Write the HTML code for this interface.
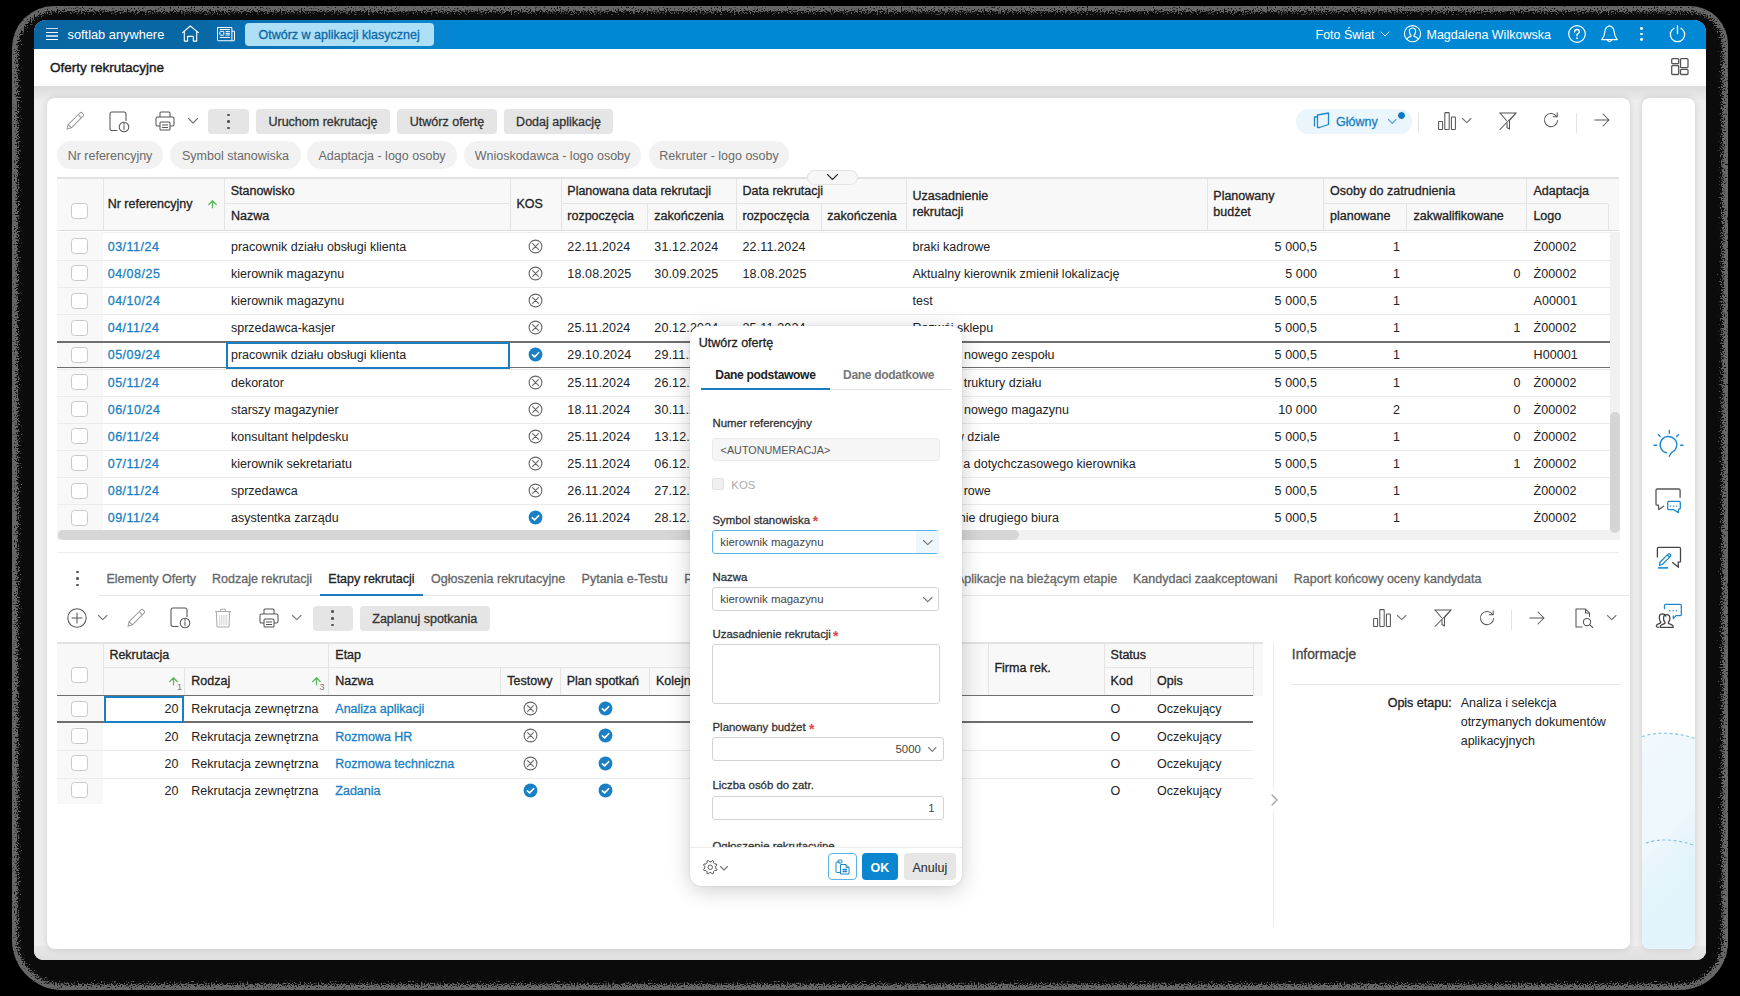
<!DOCTYPE html><html><head><meta charset="utf-8"><title>Oferty rekrutacyjne</title><style>
*{box-sizing:border-box;margin:0;padding:0}
html,body{width:1740px;height:996px;overflow:hidden;background:#000}
body{position:relative;font-family:"Liberation Sans",sans-serif;color:#222;font-size:12.5px}
.a{position:absolute}
.t{position:absolute;white-space:nowrap;line-height:1}
.m{-webkit-text-stroke:0.3px currentColor}
.b{font-weight:700}
svg{position:absolute;overflow:visible}
.ic{fill:none;stroke:#555;stroke-width:1.2;stroke-linecap:round;stroke-linejoin:round}
#scr{position:absolute;left:0;top:0;width:1740px;height:996px;clip-path:inset(20px 34px 36px 34px round 12px 12px 9px 9px);background:#eeeeee}
</style></head><body>
<svg style="left:0;top:0" width="1740" height="996" viewBox="0 0 1740 996">
<defs>
<clipPath id="bzc"><path d="M54 6 H1690 A38 38 0 0 1 1728 44 V942 A48 48 0 0 1 1680 990 H62 A50 50 0 0 1 12 940 V48 A42 42 0 0 1 54 6 Z"/></clipPath>
<filter id="dz" filterUnits="userSpaceOnUse" x="0" y="0" width="1740" height="996" color-interpolation-filters="sRGB">
<feGaussianBlur in="SourceGraphic" stdDeviation="4.5" result="bl"/>
<feTurbulence type="fractalNoise" baseFrequency="0.7" numOctaves="1" seed="11" result="nz"/>
<feColorMatrix in="nz" type="matrix" values="0 0 0 0 0  0 0 0 0 0  0 0 0 0 0  1.4 0 0 0 -0.2" result="na"/>
<feComposite in="bl" in2="na" operator="arithmetic" k1="0" k2="6" k3="-6" k4="0" result="dv"/>
<feColorMatrix in="dv" type="matrix" values="0 0 0 0 0.40  0 0 0 0 0.40  0 0 0 0 0.40  0 0 0 1 0"/>
</filter>
</defs>
<path d="M54 6 H1690 A38 38 0 0 1 1728 44 V942 A48 48 0 0 1 1680 990 H62 A50 50 0 0 1 12 940 V48 A42 42 0 0 1 54 6 Z" fill="#0b0b0b"/><g clip-path="url(#bzc)"><path d="M54 6 H1690 A38 38 0 0 1 1728 44 V942 A48 48 0 0 1 1680 990 H62 A50 50 0 0 1 12 940 V48 A42 42 0 0 1 54 6 Z" fill="none" stroke="#fff" stroke-width="13" filter="url(#dz)"/></g>
</svg>
<div id="scr">
<div class="a" style="left:34px;top:20px;width:1672px;height:29px;background:linear-gradient(90deg,#0966a3 0px,#0867a5 166px,#0a6fb0 200px,#0a78bb 290px,#0a84cc 390px,#0088d4 440px,#0088d4 1740px);"></div>
<div class="a" style="left:46px;top:28.1px;width:12px;height:1.2px;background:#c8def0;"></div>
<div class="a" style="left:46px;top:32px;width:12px;height:1.2px;background:#eef5fb;"></div>
<div class="a" style="left:46px;top:35.4px;width:12px;height:1.2px;background:#b0d2ea;"></div>
<div class="a" style="left:46px;top:39px;width:12px;height:1.2px;background:#fff;"></div>
<div class="t " style="left:67.5px;top:29.47px;font-size:12.8px;color:#fff;">softlab anywhere</div>
<svg style="left:176px;top:22px;" width="30" height="24" viewBox="0 0 30 24"><path fill="none" stroke="#fff" stroke-width="1.1" stroke-linejoin="round" stroke-linecap="round" d="M6.6 10.7 L14.3 4 L22.4 10.7 M8.3 9.3 V19.1 H11.6 V14.4 H17.3 V19.1 H20.7 V9.3"/></svg>
<svg style="left:176px;top:22px;" width="64" height="24" viewBox="0 0 64 24"><g fill="none" stroke="#fff" stroke-width="1" stroke-linejoin="round"><path d="M41.5 5.5 H55.9 V18.75 H42.3 Q41.5 18.75 41.5 18 Z"/><path d="M55.9 9.2 H58.5 V18 Q58.5 18.75 57.7 18.75 H55.9"/><rect x="43.9" y="9.3" width="3.9" height="3.9" rx="0.6"/><path d="M43.8 7.5 H53.9 M49.6 9.6 H53.9 M49.6 11.4 H53.9 M49.6 13 H53.9 M43.8 15.4 H53.9"/></g></svg>
<div class="a" style="left:245px;top:23px;width:189px;height:23px;background:#addff6;border-radius:4px"></div>
<div class="t m" style="left:258.5px;top:29.12px;font-size:12.5px;color:#0b68a8;">Otwórz w aplikacji klasycznej</div>
<div class="t " style="left:1315.5px;top:29.12px;font-size:12.5px;color:#fff;">Foto Świat</div>
<svg style="left:1380px;top:30.5px;" width="10" height="6" viewBox="0 0 10 6"><path class="ic" style="stroke:#fff;stroke-width:0.9" d="M1 1 L5 5 L9 1"/></svg>
<svg style="left:1404px;top:25.3px;" width="17" height="17" viewBox="0 0 17 17"><circle class="ic" style="stroke:#fff;stroke-width:1.15" cx="8.5" cy="8.65" r="8.1"/><path class="ic" style="stroke:#fff;stroke-width:1.15" d="M2.9 13.9 Q4.3 12 7 11.4 V10.3 Q5.4 8.9 5.4 6.1 Q5.4 3 8.5 3 Q11.6 3 11.6 6.1 Q11.6 8.9 10 10.3 V11.4 Q12.7 12 14.1 13.9"/></svg>
<div class="t " style="left:1426.5px;top:29.12px;font-size:12.5px;color:#fff;">Magdalena Wilkowska</div>
<svg style="left:1568px;top:25.2px;" width="18" height="18" viewBox="0 0 18 18"><circle class="ic" style="stroke:#fff;stroke-width:1.2" cx="9" cy="9" r="8.3"/><path class="ic" style="stroke:#fff;stroke-width:1.3" d="M6.6 7 Q6.6 4.5 9 4.5 Q11.4 4.5 11.4 6.8 Q11.4 8.3 9 9.3 V10.8"/><circle cx="9" cy="13.2" r="0.9" fill="#fff"/></svg>
<svg style="left:1601px;top:24.5px;" width="18" height="19" viewBox="0 0 18 19"><path class="ic" style="stroke:#fff;stroke-width:1.15" d="M8.5 0.9 Q4.3 1.5 3.8 7 Q3.5 11.6 0.7 14.6 H16.3 Q13.5 11.6 13.2 7 Q12.7 1.5 8.5 0.9 Z M6.4 15.3 Q8.5 17.8 10.6 15.3"/></svg>
<div class="a" style="left:1640.2px;top:27.150000000000002px;width:2.8px;height:2.8px;border-radius:50%;background:#fff"></div>
<div class="a" style="left:1640.2px;top:32.55px;width:2.8px;height:2.8px;border-radius:50%;background:#fff"></div>
<div class="a" style="left:1640.2px;top:37.949999999999996px;width:2.8px;height:2.8px;border-radius:50%;background:#fff"></div>
<svg style="left:1669px;top:25px;" width="17" height="17" viewBox="0 0 17 17"><path class="ic" style="stroke:#fff;stroke-width:1.3" d="M5 3.2 A7.2 7.2 0 1 0 12 3.2 M8.5 1 V8.5"/></svg>
<div class="a" style="left:34px;top:49px;width:1672px;height:37px;background:#fff;"></div>
<div class="t " style="left:50px;top:61.03px;font-size:13.5px;color:#1a1a1a;-webkit-text-stroke:0.4px #1a1a1a">Oferty rekrutacyjne</div>
<svg style="left:1671px;top:58px;" width="18" height="17" viewBox="0 0 18 17"><g class="ic" style="stroke:#555;stroke-width:1.3"><rect x="0.7" y="0.7" width="7" height="5" rx="1"/><rect x="0.7" y="7.5" width="7" height="9" rx="1"/><rect x="9.5" y="0.7" width="7.5" height="9" rx="1"/><rect x="9.5" y="11.3" width="7.5" height="5.2" rx="1"/></g></svg>
<div class="a" style="left:34px;top:86px;width:1672px;height:14px;background:linear-gradient(#dcdcdc,#ebebeb);"></div>
<div class="a" style="left:34px;top:946px;width:1672px;height:14px;background:linear-gradient(#e6e6e6,#e0e0e0);"></div>
<div class="a" style="left:47px;top:98px;width:1583px;height:851px;background:#fff;border-radius:8px;box-shadow:0 0 7px rgba(0,0,0,0.13)"></div>
<div class="a" style="left:1642px;top:98px;width:53px;height:851px;background:#fff;border-radius:8px;box-shadow:0 0 7px rgba(0,0,0,0.13)"></div>
<div class="a" style="left:1642px;top:728px;width:53px;height:221px;overflow:hidden;border-radius:0 0 8px 8px"><svg style="left:0;top:0" width="53" height="221" viewBox="0 0 53 221"><defs><linearGradient id="spg" x1="0" y1="0" x2="0.25" y2="1"><stop offset="0" stop-color="#f1f9fd"/><stop offset="0.55" stop-color="#edf7fc"/><stop offset="0.7" stop-color="#e5f4fb"/><stop offset="1" stop-color="#e2f3fb"/></linearGradient></defs><path d="M0 8.5 Q24 1 53 10.5 V221 H0 Z" fill="url(#spg)"/><path d="M0 8.5 Q24 1 53 10.5" fill="none" stroke="#7fc0e6" stroke-width="1.1" stroke-dasharray="3 2.6"/><path d="M4 115 Q24 108 51 117" fill="none" stroke="#7fc0e6" stroke-width="1.1" stroke-dasharray="3 2.6"/></svg></div>
<svg style="left:1650px;top:425px;" width="40" height="40" viewBox="0 0 40 40"><g fill="none" stroke="#1f87cc" stroke-width="1.4" stroke-linecap="round" stroke-linejoin="round"><path d="M16.5 27.8 A8.3 8.3 0 1 1 21.9 27.3 Q20.6 28.6 19.3 31.3"/><path d="M19.3 5.4 V8.2 M8.4 9.8 L10.2 11.6 M28.4 9.8 L26.6 11.6 M4 20.2 H6.6 M30.6 20.2 H33"/></g></svg>
<svg style="left:1650px;top:480px;" width="40" height="40" viewBox="0 0 40 40"><g fill="none" stroke-width="1.3" stroke-linecap="round" stroke-linejoin="round"><path stroke="#555" d="M30.1 17.3 V10.2 Q30.1 9 28.9 9 H7.2 Q6 9 6 10.2 V24.2 Q6 25.2 7 25.2 H8.4 L8.8 29.5 L13.7 26.3"/><path stroke="#1f87cc" d="M18.8 21.3 H29.2 Q30.3 21.3 30.3 22.4 V28 Q30.3 29.2 29.1 29.2 H28.5 V32.6 L23.7 29.7 H18.8 Q17.7 29.7 17.7 28.6 V22.4 Q17.7 21.3 18.8 21.3 Z"/></g><g fill="#1f87cc"><circle cx="20.5" cy="25.9" r="0.75"/><circle cx="23.7" cy="25.9" r="0.75"/><circle cx="26.8" cy="25.9" r="0.75"/></g></svg>
<svg style="left:1650px;top:538px;" width="40" height="40" viewBox="0 0 40 40"><g fill="none" stroke-width="1.3" stroke-linecap="round" stroke-linejoin="round"><path stroke="#444" d="M7.4 18.9 V10.6 Q7.4 9.4 8.6 9.4 H29.3 Q30.5 9.4 30.5 10.6 V23 Q30.5 24.2 29.3 24.2 H28.1 L28.5 29.3 L22.5 24.6"/><path stroke="#1f87cc" d="M9.6 27.3 L10 24.2 L18.1 16.1 Q18.9 15.3 19.7 16.1 L20.4 16.8 Q21.2 17.6 20.4 18.4 L12.3 26.5 Z M17.3 16.9 L19.6 19.2"/><path stroke="#1f87cc" stroke-width="1.6" stroke-linecap="butt" d="M8 29.9 H18.1"/></g></svg>
<svg style="left:1650px;top:595px;" width="40" height="40" viewBox="0 0 40 40"><g fill="none" stroke-width="1.3" stroke-linecap="round" stroke-linejoin="round"><path stroke="#1f87cc" d="M14.5 13.5 V10.6 Q14.5 9.4 15.7 9.4 H30.1 Q31.3 9.4 31.3 10.6 V19.4 Q31.3 20.6 30.1 20.6 H26 L23.3 23.6 V21"/><path stroke="#444" d="M16.7 19.6 Q13.5 19.6 13.5 23.2 Q13.5 26 15 27.3 V28.3 L11.6 29.8 Q10.1 30.6 10.2 32.3 H23.2 Q23.3 30.6 21.8 29.8 L18.4 28.3 V27.3 Q19.9 26 19.9 23.2 Q19.9 19.6 16.7 19.6 Z"/><path stroke="#444" d="M15.8 21.2 Q15.1 18.8 12.4 18.8 Q9.3 18.8 9.3 22.6 Q9.3 25.4 10.6 26.7 V27.9 L8 29.1 Q6.2 30 6.3 31.4 Q6.6 32.3 8.6 32.3"/></g><g fill="#1f87cc"><circle cx="19.7" cy="15.7" r="0.75"/><circle cx="23.1" cy="15.7" r="0.75"/><circle cx="26.4" cy="15.7" r="0.75"/></g></svg>
<svg style="left:66px;top:110.5px;" width="19" height="19" viewBox="0 0 19 19"><path fill="none" stroke="#9a9a9a" stroke-width="1.05" stroke-linejoin="round" d="M1 18 L2.2 13.6 L13.8 2 Q15 0.8 16.2 2 L17 2.8 Q18.2 4 17 5.2 L5.4 16.8 Z M12.2 3.6 L15.4 6.8 M2.2 13.6 L5.4 16.8"/></svg>
<svg style="left:109px;top:110.5px;" width="21" height="21" viewBox="0 0 21 21"><g fill="none" stroke="#555" stroke-width="1.05" stroke-linecap="round"><path d="M8 19.5 H3 Q1 19.5 1 17.5 V3 Q1 1 3 1 H15 Q17 1 17 3 V9.5"/><circle cx="15" cy="16" r="4.8" fill="#fff"/><path d="M15 14.8 V18.6"/></g><circle cx="15" cy="12.9" r="0.8" fill="#555"/></svg>
<svg style="left:155px;top:111px;" width="20" height="20" viewBox="0 0 20 20"><g fill="none" stroke="#555" stroke-width="1.05" stroke-linejoin="round"><path d="M5 6 V2 Q5 1 6 1 H14 Q15 1 15 2 V6"/><path d="M5 15 H2.5 Q1 15 1 13.5 V7.5 Q1 6 2.5 6 H17.5 Q19 6 19 7.5 V13.5 Q19 15 17.5 15 H15"/><rect x="5" y="11" width="10" height="8" rx="1"/><path d="M7 14 H13 M7 16.5 H13"/></g></svg>
<svg style="left:188px;top:117.5px;" width="10" height="5.5" viewBox="0 0 10 5.5"><path fill="none" stroke="#777" stroke-width="1.1" stroke-linecap="round" stroke-linejoin="round" d="M0.5 0.5 L5.0 5.0 L9.5 0.5"/></svg>
<div class="a" style="left:208px;top:109px;width:41px;height:25px;background:#e5e5e5;border-radius:4px"></div>
<div class="a" style="left:227.15px;top:113.55000000000001px;width:2.7px;height:2.7px;border-radius:50%;background:#555"></div>
<div class="a" style="left:227.15px;top:120.15px;width:2.7px;height:2.7px;border-radius:50%;background:#555"></div>
<div class="a" style="left:227.15px;top:126.75px;width:2.7px;height:2.7px;border-radius:50%;background:#555"></div>
<div class="a" style="left:256px;top:109px;width:134px;height:25px;background:#e5e5e5;border-radius:4px"></div>
<div class="t m" style="left:323.0px;transform:translateX(-50%);top:116.12px;font-size:12.5px;color:#333;">Uruchom rekrutację</div>
<div class="a" style="left:397px;top:109px;width:100px;height:25px;background:#e5e5e5;border-radius:4px"></div>
<div class="t m" style="left:447.0px;transform:translateX(-50%);top:116.12px;font-size:12.5px;color:#333;">Utwórz ofertę</div>
<div class="a" style="left:504px;top:109px;width:109px;height:25px;background:#e5e5e5;border-radius:4px"></div>
<div class="t m" style="left:558.5px;transform:translateX(-50%);top:116.12px;font-size:12.5px;color:#333;">Dodaj aplikację</div>
<div class="a" style="left:57px;top:141px;width:106px;height:28px;background:#f2f2f2;border-radius:14px"></div>
<div class="t " style="left:110.0px;transform:translateX(-50%);top:149.62px;font-size:12.5px;color:#6a6a6a;">Nr referencyjny</div>
<div class="a" style="left:170px;top:141px;width:131px;height:28px;background:#f2f2f2;border-radius:14px"></div>
<div class="t " style="left:235.5px;transform:translateX(-50%);top:149.62px;font-size:12.5px;color:#6a6a6a;">Symbol stanowiska</div>
<div class="a" style="left:307px;top:141px;width:150px;height:28px;background:#f2f2f2;border-radius:14px"></div>
<div class="t " style="left:382.0px;transform:translateX(-50%);top:149.62px;font-size:12.5px;color:#6a6a6a;">Adaptacja - logo osoby</div>
<div class="a" style="left:464px;top:141px;width:177px;height:28px;background:#f2f2f2;border-radius:14px"></div>
<div class="t " style="left:552.5px;transform:translateX(-50%);top:149.62px;font-size:12.5px;color:#6a6a6a;">Wnioskodawca - logo osoby</div>
<div class="a" style="left:649px;top:141px;width:140px;height:28px;background:#f2f2f2;border-radius:14px"></div>
<div class="t " style="left:719.0px;transform:translateX(-50%);top:149.62px;font-size:12.5px;color:#6a6a6a;">Rekruter - logo osoby</div>
<div class="a" style="left:1296px;top:109px;width:116px;height:24.5px;background:#eaf5fc;border-radius:12px"></div>
<svg style="left:1313px;top:111.5px;" width="17" height="17" viewBox="0 0 17 17"><g fill="none" stroke="#1f87cc" stroke-width="1.3" stroke-linejoin="round" stroke-linecap="round"><path d="M4.5 3 L15.5 1 V12.5 L6.5 15.5 M4.5 3 V15.5 H6.5"/><path d="M1.5 5 V14 M1.5 5 H4.5"/></g></svg>
<div class="t m" style="left:1336px;top:115.62px;font-size:12.5px;color:#1a7fc2;">Główny</div>
<svg style="left:1387.5px;top:118.5px;" width="8.5" height="4.8" viewBox="0 0 8.5 4.8"><path fill="none" stroke="#4a9fd6" stroke-width="1.1" stroke-linecap="round" stroke-linejoin="round" d="M0.5 0.5 L4.25 4.3 L8.0 0.5"/></svg>
<div class="a" style="left:1397px;top:110.5px;width:9px;height:9px;border-radius:50%;background:#0b78c0;border:1.5px solid #fff"></div>
<div class="a" style="left:1418px;top:112.5px;width:1px;height:20px;background:#e3e3e3;"></div>
<svg style="left:1437.5px;top:111.5px;" width="18" height="18" viewBox="0 0 18 18"><g fill="none" stroke="#555" stroke-width="1.05" stroke-linejoin="round"><rect x="0.6" y="9.5" width="4" height="8" rx="0.5"/><rect x="6.8" y="0.6" width="4.4" height="16.9" rx="0.5"/><rect x="13.4" y="5" width="4" height="12.5" rx="0.5"/></g></svg>
<svg style="left:1462px;top:118px;" width="9.5" height="5.2" viewBox="0 0 9.5 5.2"><path fill="none" stroke="#777" stroke-width="1.1" stroke-linecap="round" stroke-linejoin="round" d="M0.5 0.5 L4.75 4.7 L9.0 0.5"/></svg>
<svg style="left:1498.5px;top:111.5px;" width="18" height="18" viewBox="0 0 18 18"><g fill="none" stroke="#555" stroke-width="1.05" stroke-linejoin="round" stroke-linecap="round"><path d="M1 1 H17 L10.5 8.5 V17 L8 15.5 V11"/><path d="M1 1 L7.5 8.5 M1 17.5 L17 1"/></g></svg>
<svg style="left:1543px;top:112px;" width="16" height="16" viewBox="0 0 16 16"><g fill="none" stroke="#555" stroke-width="1.05" stroke-linecap="round" stroke-linejoin="round"><path d="M13.6 4.5 A6.6 6.6 0 1 0 14.6 8.5"/><path d="M14.2 0.8 V4.8 H10.2"/></g></svg>
<div class="a" style="left:1576px;top:112.5px;width:1px;height:20px;background:#e3e3e3;"></div>
<svg style="left:1593.5px;top:113px;" width="16" height="14" viewBox="0 0 16 14"><g fill="none" stroke="#555" stroke-width="1.05" stroke-linecap="round" stroke-linejoin="round"><path d="M0.8 7 H15 M9 1 L15 7 L9 13"/></g></svg>
<div class="a" style="left:807px;top:170px;width:51px;height:15px;background:#fff;border:1px solid #e3e3e3;border-radius:8px"></div>
<svg style="left:826px;top:173.5px;" width="12" height="6.5" viewBox="0 0 12 6.5"><path fill="none" stroke="#333" stroke-width="1.1" stroke-linecap="round" stroke-linejoin="round" d="M0.5 0.5 L6.0 6.0 L11.5 0.5"/></svg>
<div class="a" style="left:57px;top:177px;width:1562px;height:2px;background:#e2e2e2;"></div>
<div class="a" style="left:57px;top:179px;width:1562px;height:51px;background:#f8f8f8;"></div>
<div class="a" style="left:57px;top:229.8px;width:1562px;height:1.3px;background:#dcdcdc;"></div>
<div class="a" style="left:57px;top:232px;width:1552.5px;height:1px;background:#efefef;"></div>
<div class="a" style="left:102.5px;top:179px;width:1px;height:51px;background:#e4e4e4;"></div>
<div class="a" style="left:223.5px;top:179px;width:1px;height:51px;background:#e4e4e4;"></div>
<div class="a" style="left:510px;top:179px;width:1px;height:51px;background:#e4e4e4;"></div>
<div class="a" style="left:560.5px;top:179px;width:1px;height:51px;background:#e4e4e4;"></div>
<div class="a" style="left:735.5px;top:179px;width:1px;height:51px;background:#e4e4e4;"></div>
<div class="a" style="left:906px;top:179px;width:1px;height:51px;background:#e4e4e4;"></div>
<div class="a" style="left:1206.5px;top:179px;width:1px;height:51px;background:#e4e4e4;"></div>
<div class="a" style="left:1323px;top:179px;width:1px;height:51px;background:#e4e4e4;"></div>
<div class="a" style="left:1526px;top:179px;width:1px;height:51px;background:#e4e4e4;"></div>
<div class="a" style="left:647px;top:203.5px;width:1px;height:27px;background:#e4e4e4;"></div>
<div class="a" style="left:820.5px;top:203.5px;width:1px;height:27px;background:#e4e4e4;"></div>
<div class="a" style="left:1406px;top:203.5px;width:1px;height:27px;background:#e4e4e4;"></div>
<div class="a" style="left:1608px;top:203.5px;width:1px;height:27px;background:#e4e4e4;"></div>
<div class="a" style="left:223.5px;top:203px;width:286.5px;height:1px;background:#e4e4e4;"></div>
<div class="a" style="left:560.5px;top:203px;width:345.5px;height:1px;background:#e4e4e4;"></div>
<div class="a" style="left:1323px;top:203px;width:285px;height:1px;background:#e4e4e4;"></div>
<div class="a" style="left:71px;top:203px;width:17px;height:16px;background:#fff;border:1.4px solid #c9c9c9;border-radius:3.5px"></div>
<div class="t m" style="left:107.7px;top:198.22px;font-size:12.5px;color:#222;">Nr referencyjny</div>
<svg style="left:208px;top:200px;" width="9" height="8" viewBox="0 0 9 8"><g fill="none" stroke="#5cb85c" stroke-width="1.3" stroke-linecap="round" stroke-linejoin="round"><path d="M4.5 7.8 V0.8 M0.8 4.5 L4.5 0.8 L8.2 4.5"/></g></svg>
<div class="t m" style="left:230.7px;top:185.12px;font-size:12.5px;color:#222;">Stanowisko</div>
<div class="t m" style="left:231px;top:210.22px;font-size:12.5px;color:#222;">Nazwa</div>
<div class="t m" style="left:516.4px;top:198.12px;font-size:12.5px;color:#222;">KOS</div>
<div class="t m" style="left:567.3px;top:185.02px;font-size:12.5px;color:#222;">Planowana data rekrutacji</div>
<div class="t m" style="left:567.3px;top:210.32px;font-size:12.5px;color:#222;">rozpoczęcia</div>
<div class="t m" style="left:654.3px;top:210.32px;font-size:12.5px;color:#222;">zakończenia</div>
<div class="t m" style="left:742.5px;top:185.02px;font-size:12.5px;color:#222;">Data rekrutacji</div>
<div class="t m" style="left:742.5px;top:210.32px;font-size:12.5px;color:#222;">rozpoczęcia</div>
<div class="t m" style="left:827.3px;top:210.32px;font-size:12.5px;color:#222;">zakończenia</div>
<div class="t m" style="left:912.5px;top:189.82px;font-size:12.5px;color:#222;">Uzasadnienie</div>
<div class="t m" style="left:912.5px;top:205.82px;font-size:12.5px;color:#222;">rekrutacji</div>
<div class="t m" style="left:1213.3px;top:189.82px;font-size:12.5px;color:#222;">Planowany</div>
<div class="t m" style="left:1213.3px;top:205.82px;font-size:12.5px;color:#222;">budżet</div>
<div class="t m" style="left:1330px;top:185.02px;font-size:12.5px;color:#222;">Osoby do zatrudnienia</div>
<div class="t m" style="left:1330px;top:210.32px;font-size:12.5px;color:#222;">planowane</div>
<div class="t m" style="left:1413.5px;top:210.32px;font-size:12.5px;color:#222;">zakwalifikowane</div>
<div class="t m" style="left:1533.4px;top:185.02px;font-size:12.5px;color:#222;">Adaptacja</div>
<div class="t m" style="left:1533.4px;top:210.32px;font-size:12.5px;color:#222;">Logo</div>
<div class="a" style="left:57px;top:232px;width:45.5px;height:298px;background:#f8f8f8;"></div>
<div class="a" style="left:57px;top:260.0px;width:1552.5px;height:1px;background:#ebebeb;"></div>
<div class="a" style="left:57px;top:287.14px;width:1552.5px;height:1px;background:#ebebeb;"></div>
<div class="a" style="left:57px;top:314.28px;width:1552.5px;height:1px;background:#ebebeb;"></div>
<div class="a" style="left:57px;top:341.42px;width:1552.5px;height:1px;background:#ebebeb;"></div>
<div class="a" style="left:57px;top:368.56px;width:1552.5px;height:1px;background:#ebebeb;"></div>
<div class="a" style="left:57px;top:395.7px;width:1552.5px;height:1px;background:#ebebeb;"></div>
<div class="a" style="left:57px;top:422.84px;width:1552.5px;height:1px;background:#ebebeb;"></div>
<div class="a" style="left:57px;top:449.98px;width:1552.5px;height:1px;background:#ebebeb;"></div>
<div class="a" style="left:57px;top:477.12px;width:1552.5px;height:1px;background:#ebebeb;"></div>
<div class="a" style="left:57px;top:504.26px;width:1552.5px;height:1px;background:#ebebeb;"></div>
<div class="a" style="left:71px;top:238.3px;width:17px;height:16px;background:#fff;border:1.4px solid #c9c9c9;border-radius:3.5px"></div>
<div class="t m" style="left:107.7px;top:240.92px;font-size:12.5px;color:#1a7fc2;letter-spacing:0.5px">03/11/24</div>
<div class="t " style="left:231px;top:240.92px;font-size:12.5px;color:#222;">pracownik działu obsługi klienta</div>
<svg style="left:528.0px;top:238.8px;" width="15" height="15" viewBox="0 0 15 15"><g fill="none" stroke="#666" stroke-width="1.1" stroke-linecap="round"><circle cx="7.5" cy="7.5" r="6.4"/><path d="M4.6 4.6 L10.4 10.4 M10.4 4.6 L4.6 10.4"/></g></svg>
<div class="t " style="left:567.3px;top:240.92px;font-size:12.5px;color:#222;letter-spacing:0.15px">22.11.2024</div>
<div class="t " style="left:654.3px;top:240.92px;font-size:12.5px;color:#222;letter-spacing:0.15px">31.12.2024</div>
<div class="t " style="left:742.5px;top:240.92px;font-size:12.5px;color:#222;letter-spacing:0.15px">22.11.2024</div>
<div class="t " style="left:912.5px;top:240.92px;font-size:12.5px;color:#222;">braki kadrowe</div>
<div class="t " style="right:423px;top:240.92px;font-size:12.5px;color:#222;letter-spacing:0.1px">5 000,5</div>
<div class="t " style="right:340px;top:240.92px;font-size:12.5px;color:#222;">1</div>
<div class="t " style="right:219.5px;top:240.92px;font-size:12.5px;color:#222;"></div>
<div class="t " style="left:1533.5px;top:240.92px;font-size:12.5px;color:#222;letter-spacing:0.1px">Ż00002</div>
<div class="a" style="left:71px;top:265.44px;width:17px;height:16px;background:#fff;border:1.4px solid #c9c9c9;border-radius:3.5px"></div>
<div class="t m" style="left:107.7px;top:268.06px;font-size:12.5px;color:#1a7fc2;letter-spacing:0.5px">04/08/25</div>
<div class="t " style="left:231px;top:268.06px;font-size:12.5px;color:#222;">kierownik magazynu</div>
<svg style="left:528.0px;top:265.94px;" width="15" height="15" viewBox="0 0 15 15"><g fill="none" stroke="#666" stroke-width="1.1" stroke-linecap="round"><circle cx="7.5" cy="7.5" r="6.4"/><path d="M4.6 4.6 L10.4 10.4 M10.4 4.6 L4.6 10.4"/></g></svg>
<div class="t " style="left:567.3px;top:268.06px;font-size:12.5px;color:#222;letter-spacing:0.15px">18.08.2025</div>
<div class="t " style="left:654.3px;top:268.06px;font-size:12.5px;color:#222;letter-spacing:0.15px">30.09.2025</div>
<div class="t " style="left:742.5px;top:268.06px;font-size:12.5px;color:#222;letter-spacing:0.15px">18.08.2025</div>
<div class="t " style="left:912.5px;top:268.06px;font-size:12.5px;color:#222;">Aktualny kierownik zmienił lokalizację</div>
<div class="t " style="right:423px;top:268.06px;font-size:12.5px;color:#222;letter-spacing:0.1px">5 000</div>
<div class="t " style="right:340px;top:268.06px;font-size:12.5px;color:#222;">1</div>
<div class="t " style="right:219.5px;top:268.06px;font-size:12.5px;color:#222;">0</div>
<div class="t " style="left:1533.5px;top:268.06px;font-size:12.5px;color:#222;letter-spacing:0.1px">Ż00002</div>
<div class="a" style="left:71px;top:292.58000000000004px;width:17px;height:16px;background:#fff;border:1.4px solid #c9c9c9;border-radius:3.5px"></div>
<div class="t m" style="left:107.7px;top:295.20px;font-size:12.5px;color:#1a7fc2;letter-spacing:0.5px">04/10/24</div>
<div class="t " style="left:231px;top:295.20px;font-size:12.5px;color:#222;">kierownik magazynu</div>
<svg style="left:528.0px;top:293.08000000000004px;" width="15" height="15" viewBox="0 0 15 15"><g fill="none" stroke="#666" stroke-width="1.1" stroke-linecap="round"><circle cx="7.5" cy="7.5" r="6.4"/><path d="M4.6 4.6 L10.4 10.4 M10.4 4.6 L4.6 10.4"/></g></svg>
<div class="t " style="left:567.3px;top:295.20px;font-size:12.5px;color:#222;letter-spacing:0.15px"></div>
<div class="t " style="left:654.3px;top:295.20px;font-size:12.5px;color:#222;letter-spacing:0.15px"></div>
<div class="t " style="left:742.5px;top:295.20px;font-size:12.5px;color:#222;letter-spacing:0.15px"></div>
<div class="t " style="left:912.5px;top:295.20px;font-size:12.5px;color:#222;">test</div>
<div class="t " style="right:423px;top:295.20px;font-size:12.5px;color:#222;letter-spacing:0.1px">5 000,5</div>
<div class="t " style="right:340px;top:295.20px;font-size:12.5px;color:#222;">1</div>
<div class="t " style="right:219.5px;top:295.20px;font-size:12.5px;color:#222;"></div>
<div class="t " style="left:1533.5px;top:295.20px;font-size:12.5px;color:#222;letter-spacing:0.1px">A00001</div>
<div class="a" style="left:71px;top:319.72px;width:17px;height:16px;background:#fff;border:1.4px solid #c9c9c9;border-radius:3.5px"></div>
<div class="t m" style="left:107.7px;top:322.34px;font-size:12.5px;color:#1a7fc2;letter-spacing:0.5px">04/11/24</div>
<div class="t " style="left:231px;top:322.34px;font-size:12.5px;color:#222;">sprzedawca-kasjer</div>
<svg style="left:528.0px;top:320.22px;" width="15" height="15" viewBox="0 0 15 15"><g fill="none" stroke="#666" stroke-width="1.1" stroke-linecap="round"><circle cx="7.5" cy="7.5" r="6.4"/><path d="M4.6 4.6 L10.4 10.4 M10.4 4.6 L4.6 10.4"/></g></svg>
<div class="t " style="left:567.3px;top:322.34px;font-size:12.5px;color:#222;letter-spacing:0.15px">25.11.2024</div>
<div class="t " style="left:654.3px;top:322.34px;font-size:12.5px;color:#222;letter-spacing:0.15px">20.12.2024</div>
<div class="t " style="left:742.5px;top:322.34px;font-size:12.5px;color:#222;letter-spacing:0.15px">25.11.2024</div>
<div class="t " style="left:912.5px;top:322.34px;font-size:12.5px;color:#222;">Rozwój sklepu</div>
<div class="t " style="right:423px;top:322.34px;font-size:12.5px;color:#222;letter-spacing:0.1px">5 000,5</div>
<div class="t " style="right:340px;top:322.34px;font-size:12.5px;color:#222;">1</div>
<div class="t " style="right:219.5px;top:322.34px;font-size:12.5px;color:#222;">1</div>
<div class="t " style="left:1533.5px;top:322.34px;font-size:12.5px;color:#222;letter-spacing:0.1px">Ż00002</div>
<div class="a" style="left:71px;top:346.86px;width:17px;height:16px;background:#fff;border:1.4px solid #c9c9c9;border-radius:3.5px"></div>
<div class="t m" style="left:107.7px;top:349.48px;font-size:12.5px;color:#1a7fc2;letter-spacing:0.5px">05/09/24</div>
<div class="t " style="left:231px;top:349.48px;font-size:12.5px;color:#222;">pracownik działu obsługi klienta</div>
<svg style="left:528.0px;top:347.36px;" width="15" height="15" viewBox="0 0 15 15"><circle cx="7.5" cy="7.5" r="6.9" fill="#1a80c6"/><path fill="none" stroke="#fff" stroke-width="1.6" stroke-linecap="round" stroke-linejoin="round" d="M4.4 7.8 L6.6 9.9 L10.6 5.7"/></svg>
<div class="t " style="left:567.3px;top:349.48px;font-size:12.5px;color:#222;letter-spacing:0.15px">29.10.2024</div>
<div class="t " style="left:654.3px;top:349.48px;font-size:12.5px;color:#222;letter-spacing:0.15px">29.11.2024</div>
<div class="t " style="left:742.5px;top:349.48px;font-size:12.5px;color:#222;letter-spacing:0.15px">29.10.2024</div>
<div class="t " style="right:423px;top:349.48px;font-size:12.5px;color:#222;letter-spacing:0.1px">5 000,5</div>
<div class="t " style="right:340px;top:349.48px;font-size:12.5px;color:#222;">1</div>
<div class="t " style="right:219.5px;top:349.48px;font-size:12.5px;color:#222;"></div>
<div class="t " style="left:1533.5px;top:349.48px;font-size:12.5px;color:#222;letter-spacing:0.1px">H00001</div>
<div class="a" style="left:71px;top:374.0px;width:17px;height:16px;background:#fff;border:1.4px solid #c9c9c9;border-radius:3.5px"></div>
<div class="t m" style="left:107.7px;top:376.62px;font-size:12.5px;color:#1a7fc2;letter-spacing:0.5px">05/11/24</div>
<div class="t " style="left:231px;top:376.62px;font-size:12.5px;color:#222;">dekorator</div>
<svg style="left:528.0px;top:374.5px;" width="15" height="15" viewBox="0 0 15 15"><g fill="none" stroke="#666" stroke-width="1.1" stroke-linecap="round"><circle cx="7.5" cy="7.5" r="6.4"/><path d="M4.6 4.6 L10.4 10.4 M10.4 4.6 L4.6 10.4"/></g></svg>
<div class="t " style="left:567.3px;top:376.62px;font-size:12.5px;color:#222;letter-spacing:0.15px">25.11.2024</div>
<div class="t " style="left:654.3px;top:376.62px;font-size:12.5px;color:#222;letter-spacing:0.15px">26.12.2024</div>
<div class="t " style="left:742.5px;top:376.62px;font-size:12.5px;color:#222;letter-spacing:0.15px">25.11.2024</div>
<div class="t " style="right:423px;top:376.62px;font-size:12.5px;color:#222;letter-spacing:0.1px">5 000,5</div>
<div class="t " style="right:340px;top:376.62px;font-size:12.5px;color:#222;">1</div>
<div class="t " style="right:219.5px;top:376.62px;font-size:12.5px;color:#222;">0</div>
<div class="t " style="left:1533.5px;top:376.62px;font-size:12.5px;color:#222;letter-spacing:0.1px">Ż00002</div>
<div class="a" style="left:71px;top:401.14px;width:17px;height:16px;background:#fff;border:1.4px solid #c9c9c9;border-radius:3.5px"></div>
<div class="t m" style="left:107.7px;top:403.76px;font-size:12.5px;color:#1a7fc2;letter-spacing:0.5px">06/10/24</div>
<div class="t " style="left:231px;top:403.76px;font-size:12.5px;color:#222;">starszy magazynier</div>
<svg style="left:528.0px;top:401.64px;" width="15" height="15" viewBox="0 0 15 15"><g fill="none" stroke="#666" stroke-width="1.1" stroke-linecap="round"><circle cx="7.5" cy="7.5" r="6.4"/><path d="M4.6 4.6 L10.4 10.4 M10.4 4.6 L4.6 10.4"/></g></svg>
<div class="t " style="left:567.3px;top:403.76px;font-size:12.5px;color:#222;letter-spacing:0.15px">18.11.2024</div>
<div class="t " style="left:654.3px;top:403.76px;font-size:12.5px;color:#222;letter-spacing:0.15px">30.11.2024</div>
<div class="t " style="left:742.5px;top:403.76px;font-size:12.5px;color:#222;letter-spacing:0.15px">18.11.2024</div>
<div class="t " style="right:423px;top:403.76px;font-size:12.5px;color:#222;letter-spacing:0.1px">10 000</div>
<div class="t " style="right:340px;top:403.76px;font-size:12.5px;color:#222;">2</div>
<div class="t " style="right:219.5px;top:403.76px;font-size:12.5px;color:#222;">0</div>
<div class="t " style="left:1533.5px;top:403.76px;font-size:12.5px;color:#222;letter-spacing:0.1px">Ż00002</div>
<div class="a" style="left:71px;top:428.28000000000003px;width:17px;height:16px;background:#fff;border:1.4px solid #c9c9c9;border-radius:3.5px"></div>
<div class="t m" style="left:107.7px;top:430.90px;font-size:12.5px;color:#1a7fc2;letter-spacing:0.5px">06/11/24</div>
<div class="t " style="left:231px;top:430.90px;font-size:12.5px;color:#222;">konsultant helpdesku</div>
<svg style="left:528.0px;top:428.78000000000003px;" width="15" height="15" viewBox="0 0 15 15"><g fill="none" stroke="#666" stroke-width="1.1" stroke-linecap="round"><circle cx="7.5" cy="7.5" r="6.4"/><path d="M4.6 4.6 L10.4 10.4 M10.4 4.6 L4.6 10.4"/></g></svg>
<div class="t " style="left:567.3px;top:430.90px;font-size:12.5px;color:#222;letter-spacing:0.15px">25.11.2024</div>
<div class="t " style="left:654.3px;top:430.90px;font-size:12.5px;color:#222;letter-spacing:0.15px">13.12.2024</div>
<div class="t " style="left:742.5px;top:430.90px;font-size:12.5px;color:#222;letter-spacing:0.15px">25.11.2024</div>
<div class="t " style="right:423px;top:430.90px;font-size:12.5px;color:#222;letter-spacing:0.1px">5 000,5</div>
<div class="t " style="right:340px;top:430.90px;font-size:12.5px;color:#222;">1</div>
<div class="t " style="right:219.5px;top:430.90px;font-size:12.5px;color:#222;">0</div>
<div class="t " style="left:1533.5px;top:430.90px;font-size:12.5px;color:#222;letter-spacing:0.1px">Ż00002</div>
<div class="a" style="left:71px;top:455.42px;width:17px;height:16px;background:#fff;border:1.4px solid #c9c9c9;border-radius:3.5px"></div>
<div class="t m" style="left:107.7px;top:458.04px;font-size:12.5px;color:#1a7fc2;letter-spacing:0.5px">07/11/24</div>
<div class="t " style="left:231px;top:458.04px;font-size:12.5px;color:#222;">kierownik sekretariatu</div>
<svg style="left:528.0px;top:455.92px;" width="15" height="15" viewBox="0 0 15 15"><g fill="none" stroke="#666" stroke-width="1.1" stroke-linecap="round"><circle cx="7.5" cy="7.5" r="6.4"/><path d="M4.6 4.6 L10.4 10.4 M10.4 4.6 L4.6 10.4"/></g></svg>
<div class="t " style="left:567.3px;top:458.04px;font-size:12.5px;color:#222;letter-spacing:0.15px">25.11.2024</div>
<div class="t " style="left:654.3px;top:458.04px;font-size:12.5px;color:#222;letter-spacing:0.15px">06.12.2024</div>
<div class="t " style="left:742.5px;top:458.04px;font-size:12.5px;color:#222;letter-spacing:0.15px">25.11.2024</div>
<div class="t " style="right:423px;top:458.04px;font-size:12.5px;color:#222;letter-spacing:0.1px">5 000,5</div>
<div class="t " style="right:340px;top:458.04px;font-size:12.5px;color:#222;">1</div>
<div class="t " style="right:219.5px;top:458.04px;font-size:12.5px;color:#222;">1</div>
<div class="t " style="left:1533.5px;top:458.04px;font-size:12.5px;color:#222;letter-spacing:0.1px">Ż00002</div>
<div class="a" style="left:71px;top:482.56px;width:17px;height:16px;background:#fff;border:1.4px solid #c9c9c9;border-radius:3.5px"></div>
<div class="t m" style="left:107.7px;top:485.18px;font-size:12.5px;color:#1a7fc2;letter-spacing:0.5px">08/11/24</div>
<div class="t " style="left:231px;top:485.18px;font-size:12.5px;color:#222;">sprzedawca</div>
<svg style="left:528.0px;top:483.06px;" width="15" height="15" viewBox="0 0 15 15"><g fill="none" stroke="#666" stroke-width="1.1" stroke-linecap="round"><circle cx="7.5" cy="7.5" r="6.4"/><path d="M4.6 4.6 L10.4 10.4 M10.4 4.6 L4.6 10.4"/></g></svg>
<div class="t " style="left:567.3px;top:485.18px;font-size:12.5px;color:#222;letter-spacing:0.15px">26.11.2024</div>
<div class="t " style="left:654.3px;top:485.18px;font-size:12.5px;color:#222;letter-spacing:0.15px">27.12.2024</div>
<div class="t " style="left:742.5px;top:485.18px;font-size:12.5px;color:#222;letter-spacing:0.15px">26.11.2024</div>
<div class="t " style="right:423px;top:485.18px;font-size:12.5px;color:#222;letter-spacing:0.1px">5 000,5</div>
<div class="t " style="right:340px;top:485.18px;font-size:12.5px;color:#222;">1</div>
<div class="t " style="right:219.5px;top:485.18px;font-size:12.5px;color:#222;"></div>
<div class="t " style="left:1533.5px;top:485.18px;font-size:12.5px;color:#222;letter-spacing:0.1px">Ż00002</div>
<div class="a" style="left:71px;top:509.70000000000005px;width:17px;height:16px;background:#fff;border:1.4px solid #c9c9c9;border-radius:3.5px"></div>
<div class="t m" style="left:107.7px;top:512.32px;font-size:12.5px;color:#1a7fc2;letter-spacing:0.5px">09/11/24</div>
<div class="t " style="left:231px;top:512.32px;font-size:12.5px;color:#222;">asystentka zarządu</div>
<svg style="left:528.0px;top:510.20000000000005px;" width="15" height="15" viewBox="0 0 15 15"><circle cx="7.5" cy="7.5" r="6.9" fill="#1a80c6"/><path fill="none" stroke="#fff" stroke-width="1.6" stroke-linecap="round" stroke-linejoin="round" d="M4.4 7.8 L6.6 9.9 L10.6 5.7"/></svg>
<div class="t " style="left:567.3px;top:512.32px;font-size:12.5px;color:#222;letter-spacing:0.15px">26.11.2024</div>
<div class="t " style="left:654.3px;top:512.32px;font-size:12.5px;color:#222;letter-spacing:0.15px">28.12.2024</div>
<div class="t " style="left:742.5px;top:512.32px;font-size:12.5px;color:#222;letter-spacing:0.15px">26.11.2024</div>
<div class="t " style="right:423px;top:512.32px;font-size:12.5px;color:#222;letter-spacing:0.1px">5 000,5</div>
<div class="t " style="right:340px;top:512.32px;font-size:12.5px;color:#222;">1</div>
<div class="t " style="right:219.5px;top:512.32px;font-size:12.5px;color:#222;"></div>
<div class="t " style="left:1533.5px;top:512.32px;font-size:12.5px;color:#222;letter-spacing:0.1px">Ż00002</div>
<div class="t " style="left:964.1px;top:349.48px;font-size:12.5px;color:#222;">nowego zespołu</div>
<div class="t " style="left:963.7px;top:376.62px;font-size:12.5px;color:#222;">truktury działu</div>
<div class="t " style="left:964.0px;top:403.76px;font-size:12.5px;color:#222;">nowego magazynu</div>
<div class="t " style="left:954.8px;top:430.90px;font-size:12.5px;color:#222;">w dziale</div>
<div class="t " style="left:963.3px;top:458.04px;font-size:12.5px;color:#222;">a dotychczasowego kierownika</div>
<div class="t " style="left:963.7px;top:485.18px;font-size:12.5px;color:#222;">rowe</div>
<div class="t " style="left:958.8px;top:512.32px;font-size:12.5px;color:#222;">nie drugiego biura</div>
<div class="a" style="left:57px;top:341.3px;width:1552.5px;height:1.3px;background:#6e6e6e;"></div>
<div class="a" style="left:57px;top:367px;width:1552.5px;height:1.3px;background:#6e6e6e;"></div>
<div class="a" style="left:225.5px;top:341.5px;width:284px;height:27px;background:transparent;border:2px solid #1a7fc2"></div>
<div class="a" style="left:57px;top:530px;width:1553px;height:10px;background:#f1f1f1;"></div>
<div class="a" style="left:58px;top:530px;width:961px;height:10px;background:#d6d6d6;border-radius:5px"></div>
<div class="a" style="left:1610px;top:232px;width:9.5px;height:308px;background:#f1f1f1;"></div>
<div class="a" style="left:1610px;top:412px;width:9.5px;height:120.5px;background:#d4d4d4;border-radius:5px"></div>
<div class="a" style="left:57px;top:552px;width:1562px;height:1.2px;background:#ededed;"></div>
<div class="a" style="left:76.15px;top:570.55px;width:2.7px;height:2.7px;border-radius:50%;background:#555"></div>
<div class="a" style="left:76.15px;top:577.05px;width:2.7px;height:2.7px;border-radius:50%;background:#555"></div>
<div class="a" style="left:76.15px;top:583.55px;width:2.7px;height:2.7px;border-radius:50%;background:#555"></div>
<div class="a" style="left:98px;top:594.8px;width:1532px;height:1.2px;background:#e6e6e6;"></div>
<div class="t m" style="left:106.5px;top:573.02px;font-size:12.5px;color:#666;">Elementy Oferty</div>
<div class="t m" style="left:212px;top:573.02px;font-size:12.5px;color:#666;">Rodzaje rekrutacji</div>
<div class="t m" style="left:328.3px;top:573.02px;font-size:12.5px;color:#222;">Etapy rekrutacji</div>
<div class="a" style="left:320px;top:593.8px;width:102.6px;height:2.2px;background:#1a7fc2;"></div>
<div class="t m" style="left:431px;top:573.02px;font-size:12.5px;color:#666;">Ogłoszenia rekrutacyjne</div>
<div class="t m" style="left:581.6px;top:573.02px;font-size:12.5px;color:#666;">Pytania e-Testu</div>
<div class="t m" style="left:684.3px;top:573.02px;font-size:12.5px;color:#666;">Planowane spotkania</div>
<div class="t m" style="left:956px;top:573.02px;font-size:12.5px;color:#666;">Aplikacje na bieżącym etapie</div>
<div class="t m" style="left:1133px;top:573.02px;font-size:12.5px;color:#666;">Kandydaci zaakceptowani</div>
<div class="t m" style="left:1293.8px;top:573.02px;font-size:12.5px;color:#666;">Raport końcowy oceny kandydata</div>
<svg style="left:66.5px;top:607.5px;" width="20" height="20" viewBox="0 0 20 20"><g fill="none" stroke="#555" stroke-width="1.05" stroke-linecap="round"><circle cx="10" cy="10" r="9.2"/><path d="M10 5 V15 M5 10 H15"/></g></svg>
<svg style="left:98px;top:615px;" width="9.5" height="5.2" viewBox="0 0 9.5 5.2"><path fill="none" stroke="#777" stroke-width="1.1" stroke-linecap="round" stroke-linejoin="round" d="M0.5 0.5 L4.75 4.7 L9.0 0.5"/></svg>
<svg style="left:127px;top:607.5px;" width="19" height="19" viewBox="0 0 19 19"><path fill="none" stroke="#9a9a9a" stroke-width="1.05" stroke-linejoin="round" d="M1 18 L2.2 13.6 L13.8 2 Q15 0.8 16.2 2 L17 2.8 Q18.2 4 17 5.2 L5.4 16.8 Z M12.2 3.6 L15.4 6.8 M2.2 13.6 L5.4 16.8"/></svg>
<svg style="left:170px;top:607px;" width="21" height="21" viewBox="0 0 21 21"><g fill="none" stroke="#555" stroke-width="1.05" stroke-linecap="round"><path d="M8 19.5 H3 Q1 19.5 1 17.5 V3 Q1 1 3 1 H15 Q17 1 17 3 V9.5"/><circle cx="15" cy="16" r="4.8" fill="#fff"/><path d="M15 14.8 V18.6"/></g><circle cx="15" cy="12.9" r="0.8" fill="#555"/></svg>
<svg style="left:214px;top:607.5px;" width="18" height="20" viewBox="0 0 18 20"><g fill="none" stroke="#aaa" stroke-width="1" stroke-linejoin="round"><path d="M1 3.5 H17 M6.5 3.5 V1.2 H11.5 V3.5 M2.3 3.5 L3 19 H15 L15.7 3.5"/></g><g fill="none" stroke="#b8b8b8" stroke-width="0.6"><path d="M5.6 7 V17 M7.4 7 V17 M9.2 7 V17 M11 7 V17 M12.8 7 V17"/></g></svg>
<svg style="left:259px;top:607.5px;" width="20" height="20" viewBox="0 0 20 20"><g fill="none" stroke="#555" stroke-width="1.05" stroke-linejoin="round"><path d="M5 6 V2 Q5 1 6 1 H14 Q15 1 15 2 V6"/><path d="M5 15 H2.5 Q1 15 1 13.5 V7.5 Q1 6 2.5 6 H17.5 Q19 6 19 7.5 V13.5 Q19 15 17.5 15 H15"/><rect x="5" y="11" width="10" height="8" rx="1"/><path d="M7 14 H13 M7 16.5 H13"/></g></svg>
<svg style="left:292px;top:615px;" width="9.5" height="5.2" viewBox="0 0 9.5 5.2"><path fill="none" stroke="#777" stroke-width="1.1" stroke-linecap="round" stroke-linejoin="round" d="M0.5 0.5 L4.75 4.7 L9.0 0.5"/></svg>
<div class="a" style="left:312.5px;top:606px;width:40px;height:24.5px;background:#e5e5e5;border-radius:4px"></div>
<div class="a" style="left:331.15px;top:610.3px;width:2.7px;height:2.7px;border-radius:50%;background:#555"></div>
<div class="a" style="left:331.15px;top:616.9px;width:2.7px;height:2.7px;border-radius:50%;background:#555"></div>
<div class="a" style="left:331.15px;top:623.5px;width:2.7px;height:2.7px;border-radius:50%;background:#555"></div>
<div class="a" style="left:359.5px;top:606px;width:130.5px;height:24.5px;background:#e5e5e5;border-radius:4px"></div>
<div class="t m" style="left:424.75px;transform:translateX(-50%);top:612.92px;font-size:12.5px;color:#333;">Zaplanuj spotkania</div>
<svg style="left:1372.5px;top:609px;" width="18" height="18" viewBox="0 0 18 18"><g fill="none" stroke="#555" stroke-width="1.05" stroke-linejoin="round"><rect x="0.6" y="9.5" width="4" height="8" rx="0.5"/><rect x="6.8" y="0.6" width="4.4" height="16.9" rx="0.5"/><rect x="13.4" y="5" width="4" height="12.5" rx="0.5"/></g></svg>
<svg style="left:1397px;top:615.3px;" width="9.5" height="5.2" viewBox="0 0 9.5 5.2"><path fill="none" stroke="#777" stroke-width="1.1" stroke-linecap="round" stroke-linejoin="round" d="M0.5 0.5 L4.75 4.7 L9.0 0.5"/></svg>
<svg style="left:1434px;top:609px;" width="18" height="18" viewBox="0 0 18 18"><g fill="none" stroke="#555" stroke-width="1.05" stroke-linejoin="round" stroke-linecap="round"><path d="M1 1 H17 L10.5 8.5 V17 L8 15.5 V11"/><path d="M1 1 L7.5 8.5 M1 17.5 L17 1"/></g></svg>
<svg style="left:1478.5px;top:609.5px;" width="16" height="16" viewBox="0 0 16 16"><g fill="none" stroke="#555" stroke-width="1.05" stroke-linecap="round" stroke-linejoin="round"><path d="M13.6 4.5 A6.6 6.6 0 1 0 14.6 8.5"/><path d="M14.2 0.8 V4.8 H10.2"/></g></svg>
<div class="a" style="left:1510.5px;top:609.5px;width:1px;height:20px;background:#e3e3e3;"></div>
<svg style="left:1529px;top:610.5px;" width="16" height="14" viewBox="0 0 16 14"><g fill="none" stroke="#555" stroke-width="1.05" stroke-linecap="round" stroke-linejoin="round"><path d="M0.8 7 H15 M9 1 L15 7 L9 13"/></g></svg>
<svg style="left:1575px;top:608px;" width="19" height="20" viewBox="0 0 19 20"><g fill="none" stroke="#555" stroke-width="1.05" stroke-linejoin="round" stroke-linecap="round"><path d="M7 19 H1 V1 H10.5 L14.5 5 V8.5 M10.5 1 V5 H14.5"/><circle cx="12" cy="14" r="3.6"/><path d="M14.6 16.6 L17.8 19.5"/></g></svg>
<svg style="left:1606.5px;top:614.5px;" width="9.5" height="5.2" viewBox="0 0 9.5 5.2"><path fill="none" stroke="#777" stroke-width="1.1" stroke-linecap="round" stroke-linejoin="round" d="M0.5 0.5 L4.75 4.7 L9.0 0.5"/></svg>
<div class="a" style="left:57px;top:642px;width:1206px;height:2px;background:#e2e2e2;"></div>
<div class="a" style="left:57px;top:644px;width:1206px;height:51.5px;background:#f8f8f8;"></div>
<div class="a" style="left:102.5px;top:644px;width:1px;height:51.5px;background:#e4e4e4;"></div>
<div class="a" style="left:327.6px;top:644px;width:1px;height:51.5px;background:#e4e4e4;"></div>
<div class="a" style="left:987.7px;top:644px;width:1px;height:51.5px;background:#e4e4e4;"></div>
<div class="a" style="left:1103.5px;top:644px;width:1px;height:51.5px;background:#e4e4e4;"></div>
<div class="a" style="left:1253.3px;top:644px;width:1px;height:51.5px;background:#e4e4e4;"></div>
<div class="a" style="left:184px;top:667.8px;width:1px;height:27.7px;background:#e4e4e4;"></div>
<div class="a" style="left:499.5px;top:667.8px;width:1px;height:27.7px;background:#e4e4e4;"></div>
<div class="a" style="left:559.5px;top:667.8px;width:1px;height:27.7px;background:#e4e4e4;"></div>
<div class="a" style="left:649px;top:667.8px;width:1px;height:27.7px;background:#e4e4e4;"></div>
<div class="a" style="left:1150.2px;top:667.8px;width:1px;height:27.7px;background:#e4e4e4;"></div>
<div class="a" style="left:102.5px;top:667.3px;width:597.5px;height:1px;background:#e4e4e4;"></div>
<div class="a" style="left:1103.5px;top:667.3px;width:149.79999999999995px;height:1px;background:#e4e4e4;"></div>
<div class="a" style="left:71.2px;top:667px;width:17px;height:16px;background:#fff;border:1.4px solid #c9c9c9;border-radius:3.5px"></div>
<div class="t m" style="left:109.4px;top:649.32px;font-size:12.5px;color:#222;">Rekrutacja</div>
<svg style="left:169px;top:676.5px;" width="9" height="8" viewBox="0 0 9 8"><g fill="none" stroke="#5cb85c" stroke-width="1.3" stroke-linecap="round" stroke-linejoin="round"><path d="M4.5 7.8 V0.8 M0.8 4.5 L4.5 0.8 L8.2 4.5"/></g></svg>
<div class="t " style="left:177px;top:682.82px;font-size:9px;color:#777;">1</div>
<div class="t m" style="left:191.3px;top:675.12px;font-size:12.5px;color:#222;">Rodzaj</div>
<svg style="left:311.5px;top:676.5px;" width="9" height="8" viewBox="0 0 9 8"><g fill="none" stroke="#5cb85c" stroke-width="1.3" stroke-linecap="round" stroke-linejoin="round"><path d="M4.5 7.8 V0.8 M0.8 4.5 L4.5 0.8 L8.2 4.5"/></g></svg>
<div class="t " style="left:319.5px;top:682.82px;font-size:9px;color:#777;">3</div>
<div class="t m" style="left:335.3px;top:649.32px;font-size:12.5px;color:#222;">Etap</div>
<div class="t m" style="left:335.3px;top:675.12px;font-size:12.5px;color:#222;">Nazwa</div>
<div class="t m" style="left:507.3px;top:675.12px;font-size:12.5px;color:#222;">Testowy</div>
<div class="t m" style="left:566.7px;top:675.12px;font-size:12.5px;color:#222;">Plan spotkań</div>
<div class="t m" style="left:656px;top:675.12px;font-size:12.5px;color:#222;">Kolejność</div>
<div class="t m" style="left:994.4px;top:662.42px;font-size:12.5px;color:#222;">Firma rek.</div>
<div class="t m" style="left:1110.6px;top:649.02px;font-size:12.5px;color:#222;">Status</div>
<div class="t m" style="left:1110.6px;top:674.82px;font-size:12.5px;color:#222;">Kod</div>
<div class="t m" style="left:1157px;top:674.82px;font-size:12.5px;color:#222;">Opis</div>
<div class="a" style="left:57px;top:696px;width:45.5px;height:108px;background:#f8f8f8;"></div>
<div class="a" style="left:57px;top:750.0px;width:1196.3px;height:1px;background:#ebebeb;"></div>
<div class="a" style="left:57px;top:777.6px;width:1196.3px;height:1px;background:#ebebeb;"></div>
<div class="a" style="left:71.2px;top:700.7px;width:17px;height:16px;background:#fff;border:1.4px solid #c9c9c9;border-radius:3.5px"></div>
<div class="t " style="right:1561.6px;top:703.32px;font-size:12.5px;color:#222;">20</div>
<div class="t " style="left:191.3px;top:703.32px;font-size:12.5px;color:#222;">Rekrutacja zewnętrzna</div>
<div class="t m" style="left:335.3px;top:703.32px;font-size:12.5px;color:#1a7fc2;">Analiza aplikacji</div>
<svg style="left:522.5px;top:701.2px;" width="15" height="15" viewBox="0 0 15 15"><g fill="none" stroke="#666" stroke-width="1.1" stroke-linecap="round"><circle cx="7.5" cy="7.5" r="6.4"/><path d="M4.6 4.6 L10.4 10.4 M10.4 4.6 L4.6 10.4"/></g></svg>
<svg style="left:597.5px;top:701.2px;" width="15" height="15" viewBox="0 0 15 15"><circle cx="7.5" cy="7.5" r="6.9" fill="#1a80c6"/><path fill="none" stroke="#fff" stroke-width="1.6" stroke-linecap="round" stroke-linejoin="round" d="M4.4 7.8 L6.6 9.9 L10.6 5.7"/></svg>
<div class="t " style="left:1110.6px;top:703.32px;font-size:12.5px;color:#222;">O</div>
<div class="t " style="left:1157px;top:703.32px;font-size:12.5px;color:#222;">Oczekujący</div>
<div class="a" style="left:71.2px;top:727.9000000000001px;width:17px;height:16px;background:#fff;border:1.4px solid #c9c9c9;border-radius:3.5px"></div>
<div class="t " style="right:1561.6px;top:730.52px;font-size:12.5px;color:#222;">20</div>
<div class="t " style="left:191.3px;top:730.52px;font-size:12.5px;color:#222;">Rekrutacja zewnętrzna</div>
<div class="t m" style="left:335.3px;top:730.52px;font-size:12.5px;color:#1a7fc2;">Rozmowa HR</div>
<svg style="left:522.5px;top:728.4000000000001px;" width="15" height="15" viewBox="0 0 15 15"><g fill="none" stroke="#666" stroke-width="1.1" stroke-linecap="round"><circle cx="7.5" cy="7.5" r="6.4"/><path d="M4.6 4.6 L10.4 10.4 M10.4 4.6 L4.6 10.4"/></g></svg>
<svg style="left:597.5px;top:728.4000000000001px;" width="15" height="15" viewBox="0 0 15 15"><circle cx="7.5" cy="7.5" r="6.9" fill="#1a80c6"/><path fill="none" stroke="#fff" stroke-width="1.6" stroke-linecap="round" stroke-linejoin="round" d="M4.4 7.8 L6.6 9.9 L10.6 5.7"/></svg>
<div class="t " style="left:1110.6px;top:730.52px;font-size:12.5px;color:#222;">O</div>
<div class="t " style="left:1157px;top:730.52px;font-size:12.5px;color:#222;">Oczekujący</div>
<div class="a" style="left:71.2px;top:755.1px;width:17px;height:16px;background:#fff;border:1.4px solid #c9c9c9;border-radius:3.5px"></div>
<div class="t " style="right:1561.6px;top:757.72px;font-size:12.5px;color:#222;">20</div>
<div class="t " style="left:191.3px;top:757.72px;font-size:12.5px;color:#222;">Rekrutacja zewnętrzna</div>
<div class="t m" style="left:335.3px;top:757.72px;font-size:12.5px;color:#1a7fc2;">Rozmowa techniczna</div>
<svg style="left:522.5px;top:755.6px;" width="15" height="15" viewBox="0 0 15 15"><g fill="none" stroke="#666" stroke-width="1.1" stroke-linecap="round"><circle cx="7.5" cy="7.5" r="6.4"/><path d="M4.6 4.6 L10.4 10.4 M10.4 4.6 L4.6 10.4"/></g></svg>
<svg style="left:597.5px;top:755.6px;" width="15" height="15" viewBox="0 0 15 15"><circle cx="7.5" cy="7.5" r="6.9" fill="#1a80c6"/><path fill="none" stroke="#fff" stroke-width="1.6" stroke-linecap="round" stroke-linejoin="round" d="M4.4 7.8 L6.6 9.9 L10.6 5.7"/></svg>
<div class="t " style="left:1110.6px;top:757.72px;font-size:12.5px;color:#222;">O</div>
<div class="t " style="left:1157px;top:757.72px;font-size:12.5px;color:#222;">Oczekujący</div>
<div class="a" style="left:71.2px;top:782.3000000000001px;width:17px;height:16px;background:#fff;border:1.4px solid #c9c9c9;border-radius:3.5px"></div>
<div class="t " style="right:1561.6px;top:784.92px;font-size:12.5px;color:#222;">20</div>
<div class="t " style="left:191.3px;top:784.92px;font-size:12.5px;color:#222;">Rekrutacja zewnętrzna</div>
<div class="t m" style="left:335.3px;top:784.92px;font-size:12.5px;color:#1a7fc2;">Zadania</div>
<svg style="left:522.5px;top:782.8000000000001px;" width="15" height="15" viewBox="0 0 15 15"><circle cx="7.5" cy="7.5" r="6.9" fill="#1a80c6"/><path fill="none" stroke="#fff" stroke-width="1.6" stroke-linecap="round" stroke-linejoin="round" d="M4.4 7.8 L6.6 9.9 L10.6 5.7"/></svg>
<svg style="left:597.5px;top:782.8000000000001px;" width="15" height="15" viewBox="0 0 15 15"><circle cx="7.5" cy="7.5" r="6.9" fill="#1a80c6"/><path fill="none" stroke="#fff" stroke-width="1.6" stroke-linecap="round" stroke-linejoin="round" d="M4.4 7.8 L6.6 9.9 L10.6 5.7"/></svg>
<div class="t " style="left:1110.6px;top:784.92px;font-size:12.5px;color:#222;">O</div>
<div class="t " style="left:1157px;top:784.92px;font-size:12.5px;color:#222;">Oczekujący</div>
<div class="a" style="left:57px;top:695.2px;width:1196.3px;height:1.3px;background:#6e6e6e;"></div>
<div class="a" style="left:57px;top:721.3px;width:1196.3px;height:1.3px;background:#6e6e6e;"></div>
<div class="a" style="left:103.5px;top:695.5px;width:80.5px;height:27px;background:transparent;border:2px solid #1a7fc2"></div>
<div class="a" style="left:1273px;top:642px;width:1px;height:285px;background:#ececec;"></div>
<div class="a" style="left:1268px;top:788px;width:11px;height:24px;background:#fff;"></div>
<svg style="left:1270.5px;top:794px;" width="7" height="12" viewBox="0 0 7 12"><path fill="none" stroke="#999" stroke-width="1.1" stroke-linecap="round" stroke-linejoin="round" d="M1 1 L6 6 L1 11"/></svg>
<div class="t m" style="left:1291.8px;top:648.49px;font-size:13.8px;color:#444;">Informacje</div>
<div class="a" style="left:1291px;top:684.3px;width:330px;height:1.2px;background:#e8e8e8;"></div>
<div class="t m" style="right:288.4000000000001px;top:696.92px;font-size:12.5px;color:#222;">Opis etapu:</div>
<div class="t " style="left:1460.7px;top:696.92px;font-size:12.5px;color:#222;">Analiza i selekcja</div>
<div class="t " style="left:1460.7px;top:715.62px;font-size:12.5px;color:#222;">otrzymanych dokumentów</div>
<div class="t " style="left:1460.7px;top:734.62px;font-size:12.5px;color:#222;">aplikacyjnych</div>
<div class="a" style="left:807px;top:170px;width:51px;height:15px;background:#f7f7f7;border:1px solid #e3e3e3;border-radius:8px"></div>
<svg style="left:826.5px;top:174px;" width="11" height="6" viewBox="0 0 11 6"><path fill="none" stroke="#333" stroke-width="1.1" stroke-linecap="round" stroke-linejoin="round" d="M0.5 0.5 L5.5 5.5 L10.5 0.5"/></svg>
<div class="a" style="left:690px;top:326px;width:272px;height:560px;background:#fff;border-radius:12px;box-shadow:0 4px 22px rgba(0,0,0,0.20),0 0 3px rgba(0,0,0,0.08)"></div>
<div class="t m" style="left:698.8px;top:337.22px;font-size:12.5px;color:#222;">Utwórz ofertę</div>
<div class="a" style="left:701px;top:388.8px;width:250px;height:1px;background:#e3e3e3;"></div>
<div class="a" style="left:701px;top:388.2px;width:128.5px;height:2.2px;background:#1a7fc2;"></div>
<div class="t b" style="left:715.3px;top:369.31px;font-size:12.1px;color:#222;letter-spacing:-0.35px">Dane podstawowe</div>
<div class="t b" style="left:843px;top:369.31px;font-size:12.1px;color:#777;letter-spacing:-0.35px">Dane dodatkowe</div>
<div class="t m" style="left:712.5px;top:418.35px;font-size:11.4px;color:#333;">Numer referencyjny</div>
<div class="a" style="left:712px;top:437.7px;width:227.5px;height:23.6px;background:#f6f6f6;border:1px solid #ebebeb;border-radius:3px"></div>
<div class="t " style="left:720.6px;top:445.15px;font-size:10.8px;color:#555;">&lt;AUTONUMERACJA&gt;</div>
<div class="a" style="left:712px;top:478px;width:12px;height:12px;background:#f0f0f0;border:1px solid #e0e0e0;border-radius:2px"></div>
<div class="t " style="left:731.3px;top:480.15px;font-size:11.4px;color:#aaa;">KOS</div>
<div class="t m" style="left:712.5px;top:514.85px;font-size:11.4px;color:#333;">Symbol stanowiska</div>
<div class="t b" style="left:812.7px;top:514.09px;font-size:14px;color:#e0463e;">*</div>
<div class="a" style="left:712.3px;top:530.2px;width:227.2px;height:23.4px;background:#fff;border:1px solid #5cb3e6;border-radius:3px"></div>
<div class="a" style="left:916px;top:531.2px;width:22.7px;height:21.4px;background:#eef7fc;border-radius:0 2px 2px 0"></div>
<svg style="left:923px;top:540px;" width="9.5" height="5.2" viewBox="0 0 9.5 5.2"><path fill="none" stroke="#777" stroke-width="1.1" stroke-linecap="round" stroke-linejoin="round" d="M0.5 0.5 L4.75 4.7 L9.0 0.5"/></svg>
<div class="t " style="left:720.3px;top:537.15px;font-size:11.4px;color:#444;">kierownik magazynu</div>
<div class="t m" style="left:712.5px;top:572.35px;font-size:11.4px;color:#333;">Nazwa</div>
<div class="a" style="left:712.3px;top:587.2px;width:227.2px;height:24.1px;background:#fff;border:1px solid #d3d3d3;border-radius:3px"></div>
<svg style="left:923px;top:597px;" width="9.5" height="5.2" viewBox="0 0 9.5 5.2"><path fill="none" stroke="#777" stroke-width="1.1" stroke-linecap="round" stroke-linejoin="round" d="M0.5 0.5 L4.75 4.7 L9.0 0.5"/></svg>
<div class="t " style="left:720.3px;top:594.35px;font-size:11.4px;color:#444;">kierownik magazynu</div>
<div class="t m" style="left:712.5px;top:629.45px;font-size:11.4px;color:#333;">Uzasadnienie rekrutacji</div>
<div class="t b" style="left:833.1px;top:628.69px;font-size:14px;color:#e0463e;">*</div>
<div class="a" style="left:712px;top:644.4px;width:227.8px;height:59.5px;background:#fff;border:1px solid #d3d3d3;border-radius:3px"></div>
<div class="t m" style="left:712.5px;top:722.35px;font-size:11.4px;color:#333;">Planowany budżet</div>
<div class="t b" style="left:809.0px;top:721.59px;font-size:14px;color:#e0463e;">*</div>
<div class="a" style="left:712px;top:737px;width:231.7px;height:24.4px;background:#fff;border:1px solid #d3d3d3;border-radius:3px"></div>
<div class="t " style="right:819.2px;top:744.45px;font-size:11.4px;color:#444;">5000</div>
<svg style="left:927.5px;top:746.5px;" width="8.5" height="4.8" viewBox="0 0 8.5 4.8"><path fill="none" stroke="#777" stroke-width="1.1" stroke-linecap="round" stroke-linejoin="round" d="M0.5 0.5 L4.25 4.3 L8.0 0.5"/></svg>
<div class="t m" style="left:712.5px;top:780.45px;font-size:11.4px;color:#333;">Liczba osób do zatr.</div>
<div class="a" style="left:712px;top:795.5px;width:231.5px;height:24.2px;background:#fff;border:1px solid #d3d3d3;border-radius:3px"></div>
<div class="t " style="right:805.5px;top:802.75px;font-size:11.4px;color:#444;">1</div>
<div class="a" style="left:690px;top:836px;width:272px;height:10.5px;overflow:hidden"><div class="t m" style="left:22.5px;top:5px;font-size:11.4px;color:#333">Ogłoszenie rekrutacyjne</div></div>
<div class="a" style="left:690px;top:846.5px;width:272px;height:1px;background:#ececec;"></div>
<svg style="left:703px;top:859.5px;" width="15" height="15" viewBox="0 0 15 15"><g fill="none" stroke="#555" stroke-width="1" stroke-linejoin="round"><path d="M12.66 8.24 L13.96 9.26 L13.41 10.57 L11.77 10.38 L10.38 11.77 L10.57 13.41 L9.26 13.96 L8.24 12.66 L6.26 12.66 L5.24 13.96 L3.93 13.41 L4.12 11.77 L2.73 10.38 L1.09 10.57 L0.54 9.26 L1.84 8.24 L1.84 6.26 L0.54 5.24 L1.09 3.93 L2.73 4.12 L4.12 2.73 L3.93 1.09 L5.24 0.54 L6.26 1.84 L8.24 1.84 L9.26 0.54 L10.57 1.09 L10.38 2.73 L11.77 4.12 L13.41 3.93 L13.96 5.24 L12.66 6.26 Z"/><circle cx="7.25" cy="7.25" r="2.2"/></g></svg>
<svg style="left:720px;top:865.5px;" width="8" height="4.5" viewBox="0 0 8 4.5"><path fill="none" stroke="#777" stroke-width="1.1" stroke-linecap="round" stroke-linejoin="round" d="M0.5 0.5 L4.0 4.0 L7.5 0.5"/></svg>
<div class="a" style="left:828px;top:853.4px;width:28.7px;height:27.1px;background:#fff;border:1px solid #5cb3e6;border-radius:4px"></div>
<svg style="left:835px;top:859px;" width="16" height="16" viewBox="0 0 16 16"><g fill="none" stroke="#1f87cc" stroke-width="1" stroke-linejoin="round"><path d="M5 3 H2 Q1 3 1 4 V12.5 Q1 13.5 2 13.5 H5"/><rect x="3" y="1" width="4" height="3" rx="1"/><path d="M5.5 5.5 H11 L14 8.5 V15 H5.5 Z M11 5.5 V8.5 H14"/><path d="M7.5 10.5 H12 M7.5 12.5 H12" stroke-width="1.3"/></g></svg>
<div class="a" style="left:862px;top:853.4px;width:35.7px;height:27.1px;background:#0a86d0;border-radius:4px"></div>
<div class="t b" style="left:879.85px;transform:translateX(-50%);top:861.62px;font-size:12.5px;color:#fff;">OK</div>
<div class="a" style="left:903.7px;top:853.4px;width:52.3px;height:27.1px;background:#e6e6e6;border-radius:4px"></div>
<div class="t " style="left:929.85px;transform:translateX(-50%);top:861.62px;font-size:12.5px;color:#333;-webkit-text-stroke:0.15px #333">Anuluj</div>
</div>
</body></html>
